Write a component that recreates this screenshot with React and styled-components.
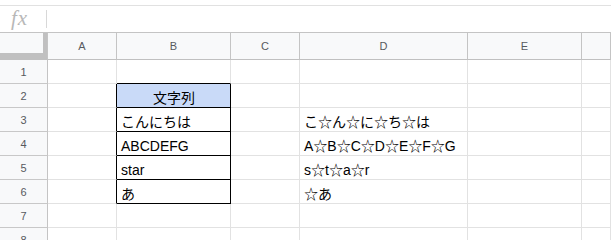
import React from 'react'
import styled, { createGlobalStyle } from 'styled-components'

const GlobalStyle = createGlobalStyle`
  body {
    margin: 0;
    background: #ffffff;
    font-family: 'Liberation Sans', 'Noto Sans CJK JP', sans-serif;
  }
`

const Page = styled.div`
  width: 611px;
  height: 240px;
  overflow: hidden;
  background: #ffffff;
`

const FormulaBar = styled.div`
  margin-top: 5px;
  height: 28px;
  box-sizing: border-box;
  border-top: 1px solid #e1e1e1;
  border-bottom: 1px solid #c4c4c4;
  display: flex;
  align-items: center;
`

const Fx = styled.span`
  width: 47px;
  box-sizing: border-box;
  padding-left: 11px;
  height: 18px;
  border-right: 1px solid #d8d8d8;
  font-family: 'Liberation Serif', serif;
  font-style: italic;
  font-size: 21px;
  line-height: 16px;
  color: #b8b8b8;
  letter-spacing: 1px;
`

const Sheet = styled.div`
  display: grid;
  grid-template-columns: 48px 69px 114px 69px 168px 114px 1fr;
  grid-template-rows: 27px;
  grid-auto-rows: 24px;
`

const Corner = styled.div`
  background: #f8f9fa;
  border-right: 1px solid #c4c4c4;
  box-shadow: inset -4px -6px 0 #c0c0c0;
  border-bottom: 1px solid #c0c0c0;
`

const ColHead = styled.div`
  background: #f8f9fa;
  border-right: 1px solid #c4c4c4;
  border-bottom: 1px solid #c0c0c0;
  display: flex;
  align-items: center;
  justify-content: center;
  font-size: 11px;
  color: #575a5e;
`

const RowHead = styled.div`
  background: #f8f9fa;
  border-right: 1px solid #c4c4c4;
  border-bottom: 1px solid #c8c8c8;
  display: flex;
  align-items: center;
  justify-content: center;
  font-size: 11px;
  color: #575a5e;
  padding-top: 1px;
`

const Cell = styled.div`
  box-sizing: border-box;
  background: ${p => p.$fill || '#ffffff'};
  border-right: 1px solid ${p => (p.$darkRight ? '#000000' : '#e2e2e2')};
  border-bottom: 1px solid ${p => (p.$darkBottom ? '#000000' : '#e2e2e2')};
  display: flex;
  align-items: flex-end;
  justify-content: ${p => (p.$center ? 'center' : 'flex-start')};
  padding: 0 3px 1px 4px;
  font-size: 14px;
  line-height: 16px;
  color: #000000;
  white-space: nowrap;
  overflow: hidden;
`

const columns = ['A', 'B', 'C', 'D', 'E', 'F']

const rows = [
  { b: '', d: '' },
  { b: '文字列', d: '', header: true },
  { b: 'こんにちは', d: 'こ☆ん☆に☆ち☆は' },
  { b: 'ABCDEFG', d: 'A☆B☆C☆D☆E☆F☆G' },
  { b: 'star', d: 's☆t☆a☆r' },
  { b: 'あ', d: '☆あ' },
  { b: '', d: '' },
  { b: '', d: '' }
]

export default function App() {
  return (
    <>
      <GlobalStyle />
      <Page>
        <FormulaBar>
          <Fx>fx</Fx>
        </FormulaBar>
        <Sheet>
          <Corner />
          {columns.map(c => (
            <ColHead key={c}>{c === 'F' ? '' : c}</ColHead>
          ))}
          {rows.map((r, i) => {
            const n = i + 1
            const inBox = n >= 2 && n <= 6
            return (
              <React.Fragment key={n}>
                <RowHead>{n}</RowHead>
                <Cell $darkRight={inBox} />
                <Cell
                  $darkRight={inBox}
                  $darkBottom={n >= 1 && n <= 6}
                  $fill={r.header ? '#c9daf8' : null}
                  $center={r.header}
                >
                  {r.b}
                </Cell>
                <Cell />
                <Cell>{r.d}</Cell>
                <Cell />
                <Cell />
              </React.Fragment>
            )
          })}
        </Sheet>
      </Page>
    </>
  )
}
